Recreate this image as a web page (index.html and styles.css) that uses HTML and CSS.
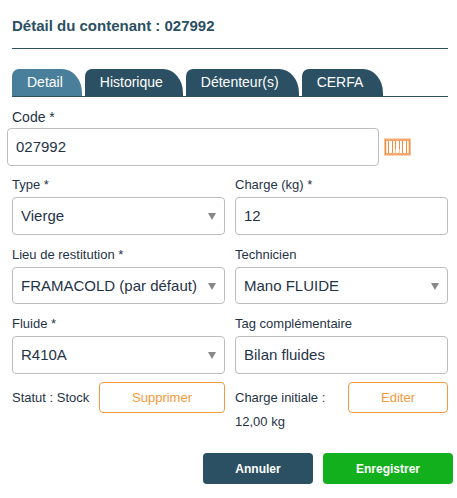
FILE: index.html
```html
<!DOCTYPE html>
<html lang="fr">
<head>
    <meta charset="UTF-8">
    <meta name="viewport" content="width=device-width, initial-scale=1.0">
    <title>Détail du contenant</title>
    <link rel="stylesheet" href="styles.css">
</head>
<body>
    <div class="dialog">
        <h1 class="title">Détail du contenant : 027992</h1>

        <div class="tabs">
            <div class="tab active">Detail</div>
            <div class="tab">Historique</div>
            <div class="tab">Détenteur(s)</div>
            <div class="tab">CERFA</div>
        </div>

        <label class="label label-code">Code *</label>
        <div class="code-row">
            <input class="field" type="text" value="027992">
            <svg class="barcode" width="27" height="18" viewBox="0 0 27 18">
                <rect x="0.500" y="0.500" width="26" height="17" fill="#fff" stroke="#fbd3b5" stroke-width="1"/>
                <rect x="1.500" y="2" width="24" height="14" fill="#fff" stroke="#f58b3c" stroke-width="1.500"/>
                <path d="M4.500 3v12M8.500 3v12M18.500 3v12M22.500 3v12M11.500 3v8M15.500 3v8" stroke="#f58b3c" stroke-width="1"/>
                <path d="M11.500 11v4M15.500 11v4" stroke="#f9c197" stroke-width="1"/>
            </svg>
        </div>

        <div class="form-grid">
            <div class="group">
                <label class="label">Type *</label>
                <div class="select-wrap">
                    <select class="field"><option>Vierge</option></select>
                </div>
            </div>
            <div class="group">
                <label class="label">Charge (kg) *</label>
                <input class="field" type="text" value="12">
            </div>
            <div class="group">
                <label class="label">Lieu de restitution *</label>
                <div class="select-wrap">
                    <select class="field"><option>FRAMACOLD (par défaut)</option></select>
                </div>
            </div>
            <div class="group">
                <label class="label">Technicien</label>
                <div class="select-wrap">
                    <select class="field"><option>Mano FLUIDE</option></select>
                </div>
            </div>
            <div class="group">
                <label class="label">Fluide *</label>
                <div class="select-wrap">
                    <select class="field"><option>R410A</option></select>
                </div>
            </div>
            <div class="group">
                <label class="label">Tag complémentaire</label>
                <input class="field" type="text" value="Bilan fluides">
            </div>
            <div class="info-row">
                <span class="info-text">Statut : Stock</span>
                <button class="btn-outline btn-delete">Supprimer</button>
            </div>
            <div class="info-row">
                <span class="info-text">Charge initiale :<br>12,00 kg</span>
                <button class="btn-outline btn-edit">Editer</button>
            </div>
        </div>

        <div class="actions">
            <button class="btn btn-cancel">Annuler</button>
            <button class="btn btn-save">Enregistrer</button>
        </div>
    </div>
</body>
</html>
```

FILE: styles.css
```css
body {
    margin: 0;
    padding: 0;
    background: #fff;
    font-family: "Liberation Sans", Arial, sans-serif;
    font-size: 14px;
    color: #1f3447;
}

.dialog {
    width: 457px;
    height: 498px;
    box-sizing: border-box;
    padding: 17px 4px 0 12px;
    overflow: hidden;
}

.title {
    margin: 0 5px 0 0;
    padding-bottom: 14px;
    font-size: 15px;
    line-height: 17px;
    font-weight: bold;
    color: #2b4f63;
    border-bottom: 1px solid #2b4f63;
}

.tabs {
    display: flex;
    gap: 3px;
    margin: 20px 5px 0 0;
    border-bottom: 1px solid #2b4f63;
}

.tab {
    height: 27px;
    line-height: 26px;
    padding: 0 20px 0 15px;
    background: #2b5064;
    color: #fff;
    border-radius: 7px 20px 0 0 / 7px 24px 0 0;
}

.tab.active {
    padding-right: 19px;
    background: #4a7f9b;
}

.label {
    display: block;
    font-size: 13px;
    line-height: 16px;
    margin-bottom: 4px;
}

.label-code {
    margin-top: 12px;
    margin-bottom: 3px;
    font-size: 14px;
}

.field {
    display: block;
    width: 100%;
    height: 37.500px;
    box-sizing: border-box;
    padding: 0 8px;
    border: 1px solid #bdbdbd;
    border-radius: 4px;
    background: #fff;
    font-family: inherit;
    font-size: 15px;
    color: #1f3447;
    appearance: none;
    outline: none;
}

.code-row {
    display: flex;
    align-items: center;
    gap: 5px;
    margin-left: -5px;
    margin-right: 42px;
}

.barcode {
    flex: none;
}

.select-wrap {
    position: relative;
}

.select-wrap::after {
    content: "";
    position: absolute;
    top: 16px;
    right: 9px;
    border-left: 4px solid transparent;
    border-right: 4px solid transparent;
    border-top: 7px solid #888;
    pointer-events: none;
}

.form-grid {
    display: grid;
    grid-template-columns: 213px 213px;
    column-gap: 10px;
    row-gap: 12px;
    margin-top: 11.500px;
}

.info-row {
    display: flex;
    justify-content: space-between;
    align-items: flex-start;
    margin-top: -3.500px;
}

.info-text {
    padding-top: 4px;
    line-height: 24px;
    font-size: 13px;
}

.btn-outline {
    height: 31px;
    padding: 0;
    background: #fff;
    border: 1px solid #f59a3c;
    border-radius: 4px;
    font-family: inherit;
    font-size: 13px;
    color: #f59a3c;
}

.btn-delete {
    width: 126px;
}

.btn-edit {
    width: 100px;
}

.actions {
    display: flex;
    justify-content: flex-end;
    gap: 10px;
    margin-top: 19px;
}

.btn {
    height: 31px;
    border: none;
    border-radius: 4px;
    font-family: inherit;
    font-size: 12px;
    font-weight: bold;
    color: #fff;
}

.btn-cancel {
    width: 110px;
    background: #2b5064;
}

.btn-save {
    width: 130px;
    background: #12b01c;
}
```
